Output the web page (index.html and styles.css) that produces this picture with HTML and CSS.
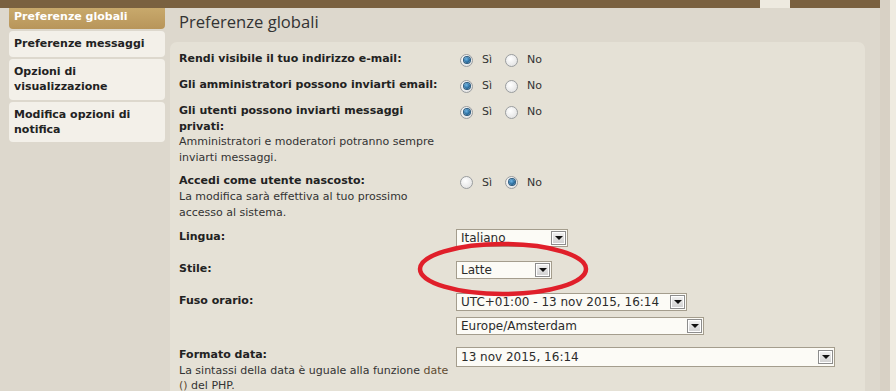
FILE: index.html
```html
<!doctype html>
<html lang="it">
<head>
	<meta charset="UTF-8">
	<title>Preferenze globali</title>
<link rel="stylesheet" href="styles.css">
</head>
<body>
<div class="wrap">
	<div class="topbar"><span class="tab"></span></div>
	<div class="page">
		<ul class="menu">
			<li class="active">Preferenze globali</li>
			<li>Preferenze messaggi</li>
			<li>Opzioni di visualizzazione</li>
			<li>Modifica opzioni di notifica</li>
		</ul>
		<div class="main">
			<h2 class="title">Preferenze globali</h2>
			<div class="panel">
				<dl class="row">
					<dt><b>Rendi visibile il tuo indirizzo e-mail:</b></dt>
					<dd class="radios"><span class="radio on"></span><span class="opt">Sì</span><span class="radio"></span><span class="opt">No</span></dd>
				</dl>
				<dl class="row">
					<dt><b>Gli amministratori possono inviarti email:</b></dt>
					<dd class="radios"><span class="radio on"></span><span class="opt">Sì</span><span class="radio"></span><span class="opt">No</span></dd>
				</dl>
				<dl class="row">
					<dt><b>Gli utenti possono inviarti messaggi privati:</b><br>Amministratori e moderatori potranno sempre inviarti messaggi.</dt>
					<dd class="radios"><span class="radio on"></span><span class="opt">Sì</span><span class="radio"></span><span class="opt">No</span></dd>
				</dl>
				<dl class="row">
					<dt><b>Accedi come utente nascosto:</b><br>La modifica sarà effettiva al tuo prossimo accesso al sistema.</dt>
					<dd class="radios"><span class="radio"></span><span class="opt">Sì</span><span class="radio on"></span><span class="opt">No</span></dd>
				</dl>
				<dl class="row row-sel">
					<dt><b>Lingua:</b></dt>
					<dd class="selects"><div class="sel w-lang">Italiano<span class="arrow"></span></div></dd>
				</dl>
				<dl class="row row-sel">
					<dt><b>Stile:</b></dt>
					<dd class="selects"><div class="sel w-style">Latte<span class="arrow"></span></div></dd>
				</dl>
				<dl class="row row-sel">
					<dt><b>Fuso orario:</b></dt>
					<dd class="selects two">
						<div class="sel w-utc">UTC+01:00 - 13 nov 2015, 16:14<span class="arrow"></span></div>
						<div class="sel w-zone">Europe/Amsterdam<span class="arrow"></span></div>
					</dd>
				</dl>
				<dl class="row row-sel">
					<dt><b>Formato data:</b><br>La sintassi della data è uguale alla funzione <a class="link">date<wbr>()</a> del PHP.</dt>
					<dd class="selects"><div class="sel w-date">13 nov 2015, 16:14<span class="arrow"></span></div></dd>
				</dl>
			</div>
		</div>
	</div>
	<!-- evidenziazione disegnata a mano sopra lo screenshot -->
	<svg class="mark" width="180" height="62" viewBox="0 0 180 62">
		<ellipse cx="90" cy="31" rx="83" ry="25" fill="none" stroke="#e01f2a" stroke-width="4.5"/>
	</svg>
</div>
<div class="edge"></div>
</body>
</html>
```

FILE: styles.css
```css
*{
	margin:0;
	padding:0;
	box-sizing:border-box;
}
body{
	display:flex;
	height:391px;
	overflow:hidden;
	background:#ddd8cd;
	font-family:"DejaVu Sans", Verdana, sans-serif;
	font-size:11px;
	line-height:15.6px;
	color:#333;
}
.wrap{
	width:880px;
	height:391px;
	overflow:hidden;
	position:relative;
}
.edge{
	width:16px;
	border-left:10px solid #d8d1c5;
	background:#efebe1;
}
.topbar{
	height:8px;
	background:#7a6140;
	position:relative;
}
.tab{
	position:absolute;
	left:760px;
	top:0;
	width:30px;
	height:8px;
	background:#eeeae0;
}
.page{
	display:flex;
}
.menu{
	list-style:none;
	width:156px;
	margin-left:9px;
	display:flex;
	flex-direction:column;
	gap:2px;
}
.menu li{
	background:#f3f0e9;
	border-radius:4px;
	padding:5px 6px 5px 5px;
	font-weight:bold;
	line-height:15.4px;
	color:#222;
}
.menu li.active{
	background:linear-gradient(#c8a96c,#b8955a);
	color:#fff;
	border-radius:0 0 4px 4px;
	padding-top:1px;
}
.main{
	margin-left:5px;
	width:695px;
}
.title{
	font-family:"Open Sans", sans-serif;
	font-weight:normal;
	font-size:16.6px;
	line-height:20px;
	color:#333;
	padding:4px 0 0 9px;
	height:34px;
}
.panel{
	background:#e5e1d6;
	border-radius:7px 7px 0 0;
	padding:5px 9px 0;
	height:349px;
}
.row{
	display:flex;
	padding:4px 0;
}
.row dt{
	width:272px;
	margin-right:5px;
}
.row-sel dt{
	padding-top:1px;
}
.row b{
	color:#222;
}
.radios{
	display:flex;
	align-items:center;
	height:18px;
	padding-left:4px;
}
.radio{
	width:13px;
	height:13px;
	border-radius:50%;
	border:1px solid #9a9d9f;
	background:radial-gradient(circle at 40% 35%,#fff,#dcdcdc);
	position:relative;
}
.radio.on::after{
	content:"";
	position:absolute;
	left:2.5px;
	top:2.5px;
	width:6px;
	height:6px;
	border-radius:50%;
	background:radial-gradient(circle at 40% 35%,#6fb6e6,#1b5d8f 70%);
	box-shadow:0 0 0 1px #2b5a7e;
}
.opt{
	margin:0 13px 0 9px;
	color:#333;
}
.selects{
	display:flex;
	flex-direction:column;
	gap:6px;
	padding:1px 0 5px;
}
.selects.two{
	padding-bottom:3px;
}
.sel{
	position:relative;
	height:18px;
	border:1px solid #a49d8d;
	background:#fcfbf6;
	font-size:12px;
	line-height:16px;
	padding-left:4px;
	white-space:nowrap;
	overflow:hidden;
	color:#2b2b2b;
}
.arrow{
	position:absolute;
	right:1px;
	top:1px;
	width:15px;
	height:14px;
	border:1px solid #8d8d8d;
	box-shadow:inset 0 0 0 1px #fff;
	background:linear-gradient(#f2f2f2,#cfcfcf);
}
.arrow::after{
	content:"";
	position:absolute;
	left:3px;
	top:4px;
	border-left:4px solid transparent;
	border-right:4px solid transparent;
	border-top:4px solid #111;
}
.w-lang{ width:112px; }
.w-style{ width:96px; }
.w-utc{ width:231px; }
.w-zone{ width:248px; }
.w-date{ width:379px; height:20px; line-height:18px; }
.w-date .arrow{ top:2px; }
.link{
	color:#5e4a30;
}
.mark{
	position:absolute;
	left:413px;
	top:238px;
}
```
